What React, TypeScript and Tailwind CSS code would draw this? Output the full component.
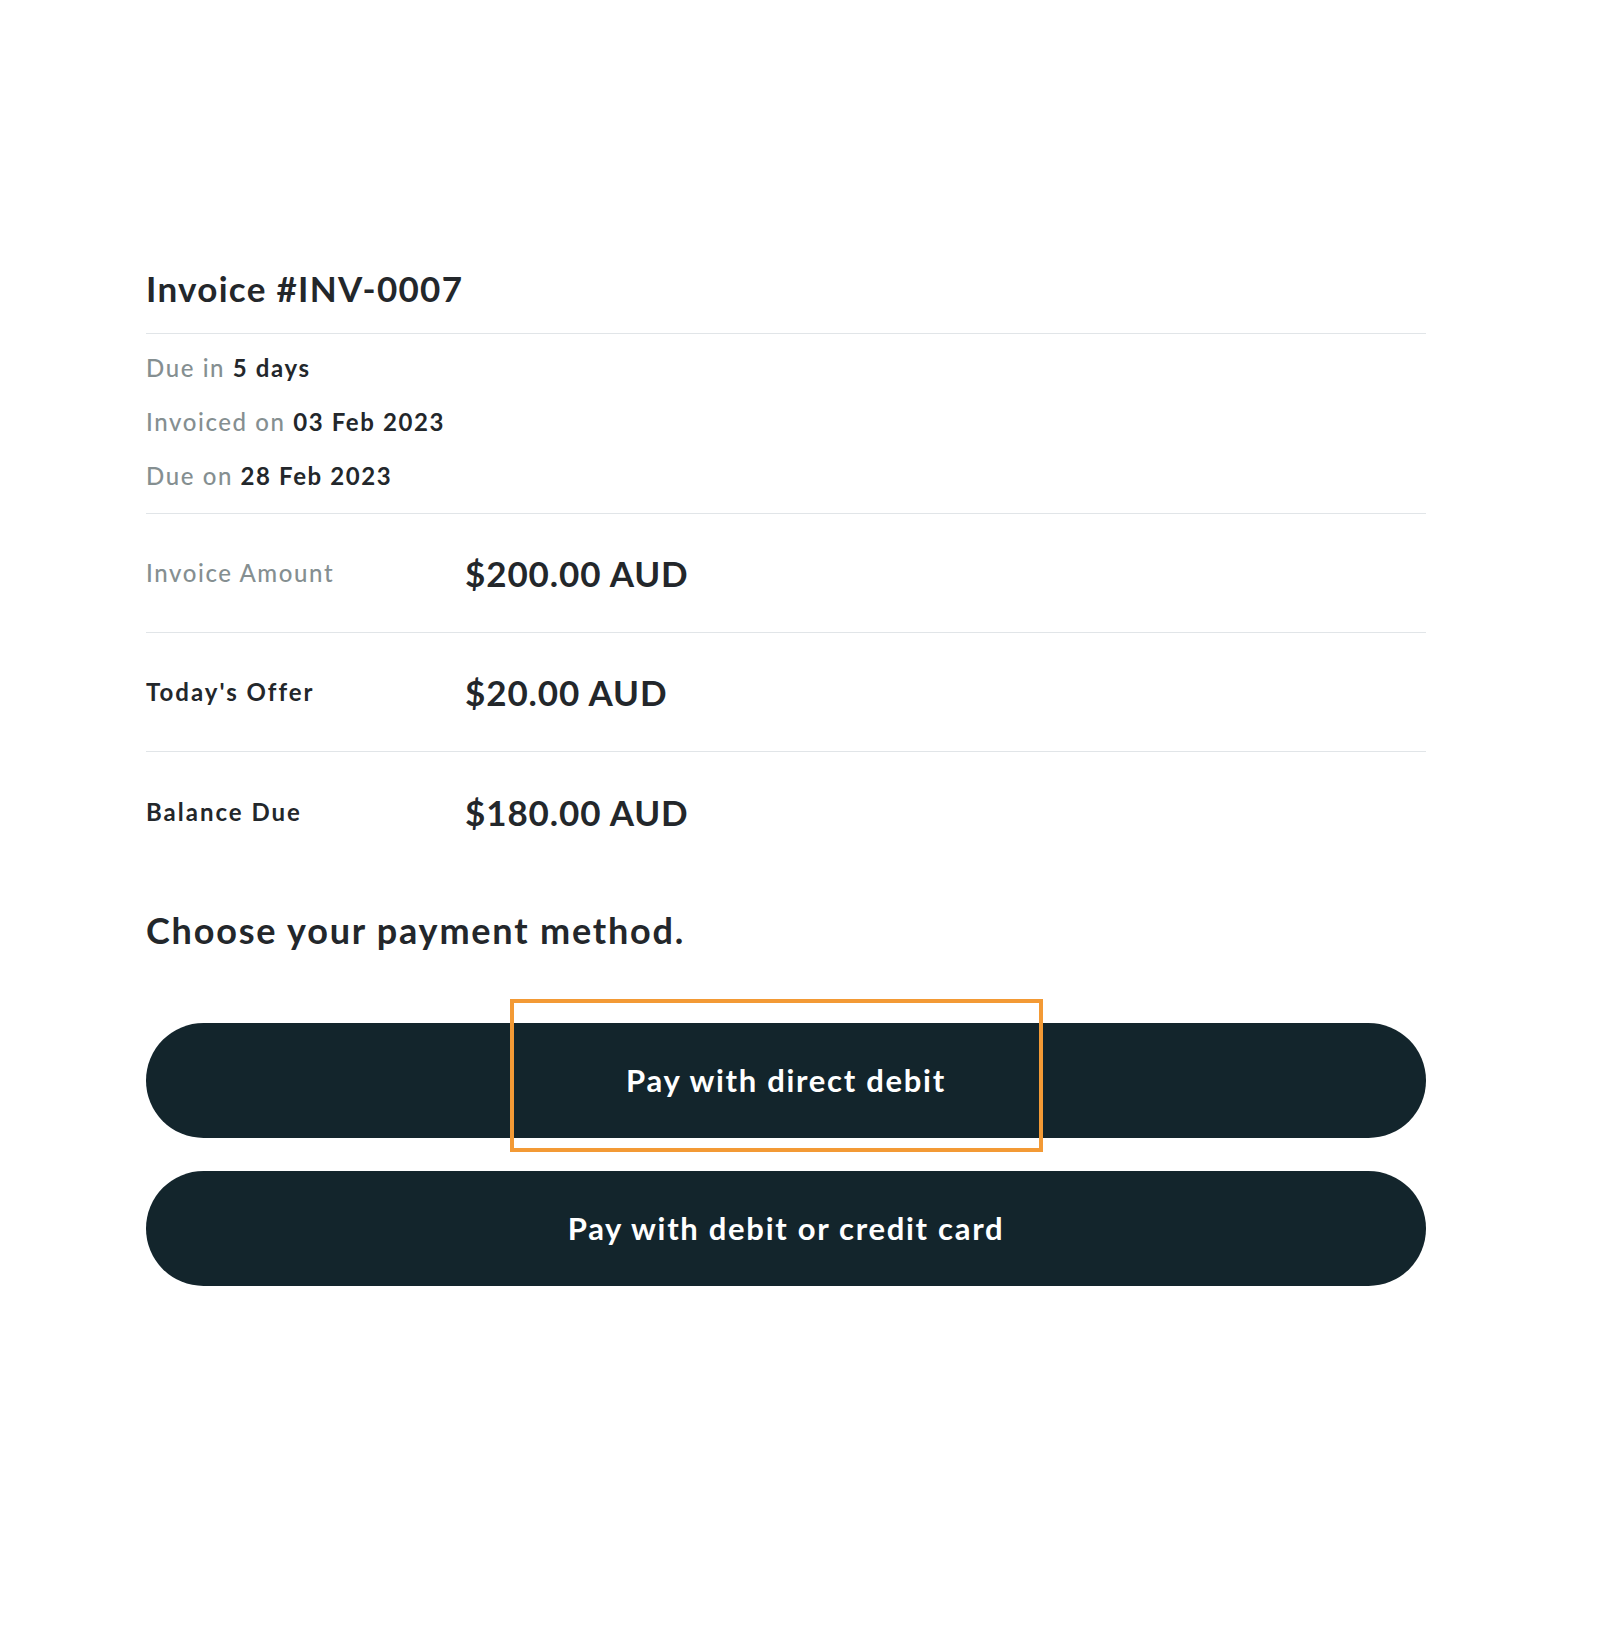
const font = { fontFamily: "Lato, 'Open Sans', sans-serif" };

function AmountRow({
  label,
  amount,
  muted,
  last,
}: {
  label: string;
  amount: string;
  muted?: boolean;
  last?: boolean;
}) {
  return (
    <div
      className={`flex items-center ${last ? "h-[120px]" : "h-[119px] border-b border-[#e1e5e8]"}`}
    >
      <div
        className={`w-[319px] text-[24px] ${muted ? "text-[#858f91] font-medium tracking-[1.6px]" : "text-[#23272b] font-bold tracking-[2px]"}`}
      >
        {label}
      </div>
      <div className="text-[35px] font-bold tracking-[0.9px] text-[#23272b]">{amount}</div>
    </div>
  );
}

export default function App() {
  return (
    <div className="min-h-[1636px] w-full bg-white" style={font}>
      <div className="relative ml-[146px] w-[1280px] pt-[266px]">
        <h1 className="h-[44px] text-[35px] leading-[44px] font-bold tracking-[1.3px] text-[#23272b]">
          Invoice #INV-0007
        </h1>
        <div className="mt-[23px] border-t border-[#e1e5e8] pt-[7px] pb-[10px] text-[24px] leading-[54px] tracking-[1.6px]">
          <p className="font-medium text-[#858f91]">
            Due in <span className="font-bold text-[#23272b]">5 days</span>
          </p>
          <p className="font-medium text-[#858f91]">
            Invoiced on{" "}
            <span className="font-bold text-[#23272b]">03 Feb 2023</span>
          </p>
          <p className="font-medium text-[#858f91]">
            Due on <span className="font-bold text-[#23272b]">28 Feb 2023</span>
          </p>
        </div>
        <div className="border-t border-[#e1e5e8]">
          <AmountRow label="Invoice Amount" amount="$200.00 AUD" muted />
          <AmountRow label="Today's Offer" amount="$20.00 AUD" />
          <AmountRow label="Balance Due" amount="$180.00 AUD" last />
        </div>
        <h2 className="mt-[36px] h-[44px] text-[36px] leading-[44px] font-bold tracking-[1.8px] text-[#23272b]">
          Choose your payment method.
        </h2>
        <div className="mt-[71px] flex flex-col gap-[33px]">
          <button className="h-[115px] w-full rounded-full bg-[#13252c] text-[31px] font-bold tracking-[1.7px] text-white">
            Pay with direct debit
          </button>
          <button className="h-[115px] w-full rounded-full bg-[#13252c] text-[31px] font-bold tracking-[1.7px] text-white">
            Pay with debit or credit card
          </button>
        </div>
        <div className="pointer-events-none absolute left-[364px] top-[999px] h-[153px] w-[533px] border-4 border-[#f39a35]" />
      </div>
    </div>
  );
}
